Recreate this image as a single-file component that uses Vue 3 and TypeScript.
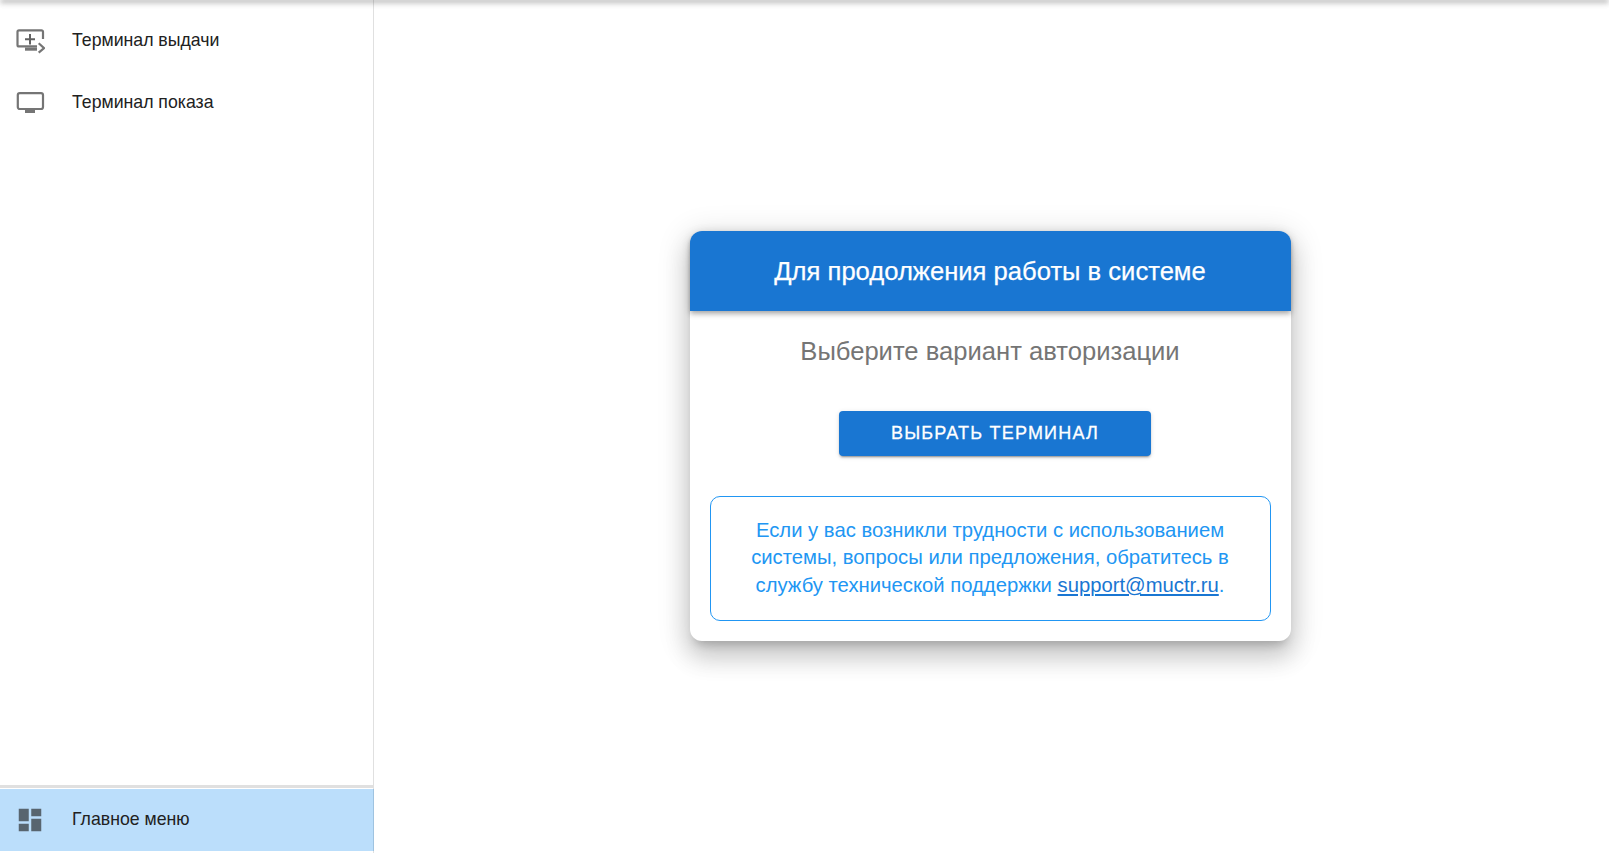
<script setup lang="ts">
const topItems = [
  { label: 'Терминал выдачи', kind: 'plus' },
  { label: 'Терминал показа', kind: 'plain' },
]
</script>

<template>
  <div class="page">
    <div class="topshadow"></div>
    <aside class="side">
      <nav class="nav">
        <a v-for="item in topItems" :key="item.label" class="row">
          <svg class="ico" viewBox="0 0 30 30" width="30" height="30" fill="none">
            <template v-if="item.kind === 'plus'">
              <path d="M22 21.4H4a1.5 1.5 0 0 1-1.5-1.5V6.8a1.5 1.5 0 0 1 1.5-1.5h22.5a1.5 1.5 0 0 1 1.5 1.5V14" stroke="#757575" stroke-width="2.2" />
              <path d="M10 14.3h10M15 9v10.4" stroke="#616161" stroke-width="2" />
              <path d="M10 22.5h12v3.2H10z" fill="#757575" />
              <path d="M23.7 18.3l5.4 4.8-5.4 4.6" stroke="#757575" stroke-width="2.2" />
            </template>
            <template v-else>
              <rect x="2.8" y="6.1" width="25.2" height="15.9" rx="2" stroke="#757575" stroke-width="2.2" />
              <path d="M10 23h10v3H10z" fill="#757575" />
            </template>
          </svg>
          <span class="label">{{ item.label }}</span>
        </a>
      </nav>
      <div class="foot">
        <a class="row active">
          <svg class="ico" viewBox="0 0 24 24" width="30" height="30">
            <path d="M13 3v6h8V3M13 21h8V11h-8M3 21h8v-6H3M3 13h8V3H3v10z" fill="#58656f" />
          </svg>
          <span class="label">Главное меню</span>
        </a>
      </div>
    </aside>
    <main class="main">
      <section class="card">
        <header class="head">Для продолжения работы в системе</header>
        <div class="body">
          <p class="sub">Выберите вариант авторизации</p>
          <button class="btn" type="button">Выбрать терминал</button>
          <div class="info">
            Если у вас возникли трудности с использованием системы, вопросы или предложения, обратитесь в службу технической поддержки <a class="mail" href="#">support@muctr.ru</a>.
          </div>
        </div>
      </section>
    </main>
  </div>
</template>

<style>
html, body { margin: 0; background: #fff; overflow: hidden; }
</style>

<style scoped>
.page {
  position: relative;
  display: flex;
  height: 853px;
  font-family: "Liberation Sans", Arial, sans-serif;
  color: #212121;
}
.topshadow {
  position: absolute;
  top: -4px;
  left: 0;
  right: 0;
  height: 4px;
  box-shadow: 0 2px 4px -1px rgba(0,0,0,.2), 0 4px 5px 0 rgba(0,0,0,.14), 0 1px 10px 0 rgba(0,0,0,.12);
}
.side {
  width: 373px;
  flex: none;
  border-right: 1px solid #e0e0e0;
  display: flex;
  flex-direction: column;
  justify-content: space-between;
}
.nav { padding-top: 9px; }
.foot { border-top: 3px solid #e0e0e0; padding: 1px 0 2px; }
.row {
  height: 62px;
  display: flex;
  align-items: center;
  padding-left: 15px;
  gap: 27px;
}
.active { background: #bbdefb; box-shadow: 1px 0 0 #9fc3e0; }
.ico { flex: none; display: block; }
.label { font-size: 17.7px; }
.active .label { padding-bottom: 2px; }
.main {
  flex: 1;
  display: flex;
  justify-content: center;
  padding-top: 231px;
  padding-right: 3px;
}
.card {
  width: 601px;
  height: 410px;
  border-radius: 12px;
  background: #fff;
  box-shadow: 0 8px 10px -5px rgba(0,0,0,.2), 0 16px 24px 2px rgba(0,0,0,.14), 0 6px 30px 5px rgba(0,0,0,.12);
}
.head {
  position: relative;
  height: 80px;
  display: flex;
  align-items: center;
  justify-content: center;
  background: #1976d2;
  color: #fff;
  font-size: 25.6px;
  -webkit-text-stroke: .25px #fff;
  border-radius: 12px 12px 0 0;
  box-shadow: 0 2px 4px -1px rgba(0,0,0,.2), 0 4px 5px 0 rgba(0,0,0,.14), 0 1px 10px 0 rgba(0,0,0,.12);
}
.body {
  padding: 0 20px;
  display: flex;
  flex-direction: column;
  align-items: center;
}
.sub {
  margin: 24px 0 0;
  font-size: 25.6px;
  line-height: 32px;
  color: #757575;
}
.btn {
  margin: 44px 0 0 10px;
  width: 312px;
  height: 45px;
  border: 0;
  border-radius: 4px;
  background: #1976d2;
  color: #fff;
  font: 500 18px "Liberation Sans", Arial, sans-serif;
  letter-spacing: 1.2px;
  text-transform: uppercase;
  -webkit-text-stroke: .3px #fff;
  box-shadow: 0 3px 1px -2px rgba(0,0,0,.2), 0 2px 2px 0 rgba(0,0,0,.14), 0 1px 5px 0 rgba(0,0,0,.12);
}
.info {
  margin-top: 40px;
  width: 100%;
  box-sizing: border-box;
  height: 125px;
  padding: 20px 30px;
  border: 1px solid #2196f3;
  border-radius: 10px;
  color: #2196f3;
  font-size: 20.25px;
  line-height: 27.4px;
  text-align: center;
}
.mail { color: #1976d2; }
</style>
